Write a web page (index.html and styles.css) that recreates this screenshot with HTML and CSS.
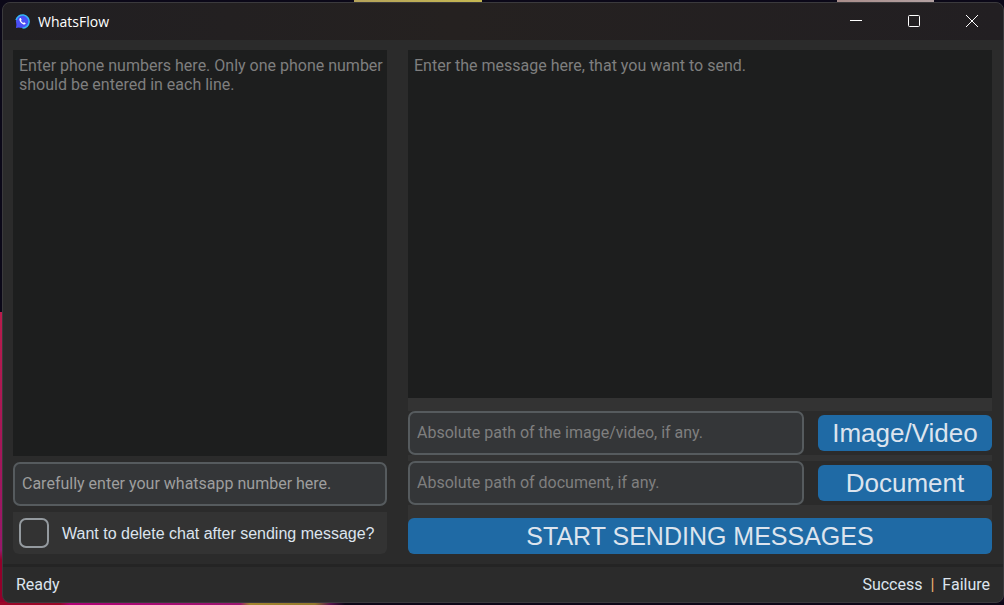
FILE: index.html
```html
<!DOCTYPE html>
<html lang="en">
<head>
<meta charset="utf-8">
<meta name="viewport" content="width=device-width, initial-scale=1">
<title>WhatsFlow</title>
<link rel="stylesheet" href="styles.css">
</head>
<body>
<div class="window">
  <header class="titlebar">
    <svg class="logo" viewBox="0 0 16 16" aria-hidden="true">
      <circle cx="8" cy="8" r="7" fill="#4a4ff5"/>
      <path d="M1 15 L1.700 10 L6 14 Z" fill="#4a4ff5"/>
      <path d="M1.200 6.500 A7 7 0 1 1 8 15" fill="none" stroke="#35b6f5" stroke-width="1.700"/>
      <path d="M5.200 4.300 Q4 5.400 5 7.400 Q6.500 10.400 9 11.200 Q10.800 11.500 11.500 10.200 L9.800 8.900 L8.700 9.600 Q7.200 8.800 6.400 7.200 L7.100 6.200 L6.200 4.300 Z" fill="#fff"/>
    </svg>
    <h1 class="title">WhatsFlow</h1>
    <div class="window-controls">
      <button class="control" type="button" aria-label="Minimize"><svg viewBox="0 0 14 14"><path d="M1 6.500H13"/></svg></button>
      <button class="control" type="button" aria-label="Maximize"><svg viewBox="0 0 14 14"><rect x="1.500" y="1.500" width="11" height="11" rx="1"/></svg></button>
      <button class="control" type="button" aria-label="Close"><svg viewBox="0 0 14 14"><path d="M1 1L13 13M13 1L1 13"/></svg></button>
    </div>
  </header>
  <main class="content">
    <section class="recipients">
      <textarea class="editor" aria-label="Phone numbers" placeholder="Enter phone numbers here. Only one phone number should be entered in each line."></textarea>
      <input class="field own-number" type="text" aria-label="Your WhatsApp number" placeholder="Carefully enter your whatsapp number here.">
      <label class="option"><input class="checkbox" type="checkbox">Want to delete chat after sending message?</label>
    </section>
    <section class="message">
      <textarea class="editor" aria-label="Message" placeholder="Enter the message here, that you want to send."></textarea>
      <div class="attachments">
        <div class="attachment">
          <input class="field" type="text" aria-label="Image or video path" placeholder="Absolute path of the image/video, if any.">
          <button class="button" type="button">Image/Video</button>
        </div>
        <div class="attachment">
          <input class="field" type="text" aria-label="Document path" placeholder="Absolute path of document, if any.">
          <button class="button" type="button">Document</button>
        </div>
      </div>
      <button class="button send" type="button">START SENDING MESSAGES</button>
    </section>
  </main>
  <footer class="statusbar">
    <span>Ready</span>
    <span class="results"><span>Success</span><span class="divider">|</span><span>Failure</span></span>
  </footer>
</div>
</body>
</html>
```
FILE: styles.css
```css
* { box-sizing: border-box; }

body {
  margin: 0;
  min-height: 100vh;
  display: flex;
  padding: 2px 0 2px 2px;
  background:
    linear-gradient(90deg, transparent 354px, #b5a35b 354px, #c6b852 482px, transparent 482px, transparent 837px, #a98d8a 837px, #b3a1a2 934px, transparent 934px) top / 100% 3px no-repeat,
    linear-gradient(90deg, #9a0628 60px, #b00075 70px, #9b1470 240px, #a2852d 250px, #93792c 315px, #5b1450 330px, #0d0717 345px) bottom / 100% 3px no-repeat,
    linear-gradient(#0b0818 312px, #b91c4c 312px, #a61758 440px, #97186a 550px, #92002a 560px) left / 14px 100% no-repeat,
    linear-gradient(#0b0818 57px, #a87676 57px, #784450 160px, #120a1b 190px) right / 14px 100% no-repeat,
    #0b0818;
  color: #dce4ee;
  font: 16px/19px Roboto, sans-serif;
}

button, input, textarea { font: inherit; color: inherit; margin: 0; }

.window {
  flex: 1;
  display: flex;
  flex-direction: column;
  min-width: 0;
  overflow: hidden;
  border: 1px solid #3b3a3d;
  border-radius: 8px;
  background: #2b2b2b;
}

.titlebar {
  display: flex;
  align-items: center;
  height: 37px;
  padding: 0 2px 0 12px;
  background: linear-gradient(90deg, #211f22, #252120 45%, #221f22);
}

.logo { width: 15px; height: 15px; margin-right: 8px; }

.title {
  margin: 0;
  color: #fff;
  font: 14px/20px "Open Sans", "Noto Sans", sans-serif;
}

.window-controls { display: flex; margin-left: auto; align-self: stretch; }

.control {
  display: grid;
  place-items: center;
  width: 58px;
  padding: 0 0 2px;
  border: 0;
  background: none;
}

.control svg { width: 14px; height: 14px; fill: none; stroke: #fff; stroke-width: 1; }

.content {
  flex: 1;
  display: grid;
  grid-template-columns: 374fr 584fr;
  gap: 21px;
  min-height: 0;
  padding: 10px 11px 10px 10px;
}

.recipients, .message { display: flex; flex-direction: column; min-width: 0; }

.recipients { gap: 6px; }

.message { background: #333; border-radius: 0 0 6px 6px; }

.editor {
  flex: 1;
  width: 100%;
  min-height: 0;
  padding: 6px 0 6px 6px;
  border: 0;
  resize: none;
  background: #1d1e1e;
}

.editor::placeholder { color: #7f7f7f; }

.field {
  flex: 1;
  min-width: 0;
  height: 44px;
  padding: 0 7px 2px;
  border: 2px solid #565b5e;
  border-radius: 7px;
  background: #343638;
}

.field::placeholder { color: #7f7f7f; opacity: 1; }

.own-number { flex: none; }
.own-number::placeholder { color: #9e9e9e; }

.option {
  display: flex;
  align-items: center;
  gap: 13px;
  height: 42px;
  padding: 0 6px;
  border-radius: 0 0 6px 6px;
  background: #333;
  font-family: "Liberation Sans", Arial, sans-serif;
  white-space: nowrap;
}

.checkbox {
  appearance: none;
  flex: none;
  width: 30px;
  height: 30px;
  border: 2px solid #949a9f;
  border-radius: 7px;
}

.checkbox:checked { background: #1f6aa5; }

.attachments { display: flex; flex-direction: column; gap: 6px; padding: 13px 0; }

.attachment {
  display: grid;
  grid-template-columns: 396fr 174fr;
  align-items: center;
  gap: 14px;
  background: #2b2b2b;
}

.button {
  height: 36px;
  padding: 0;
  border: 0;
  border-radius: 6px;
  background: #1f6aa5;
  font: 26px/36px "Liberation Sans", Arial, sans-serif;
}

.send { font-size: 25px; }

.statusbar {
  display: flex;
  align-items: center;
  justify-content: space-between;
  height: 38px;
  padding: 0 13px;
  border-top: 3px solid #242424;
}

.results { display: flex; gap: 8px; }
.divider { color: #f0b070; }
```
